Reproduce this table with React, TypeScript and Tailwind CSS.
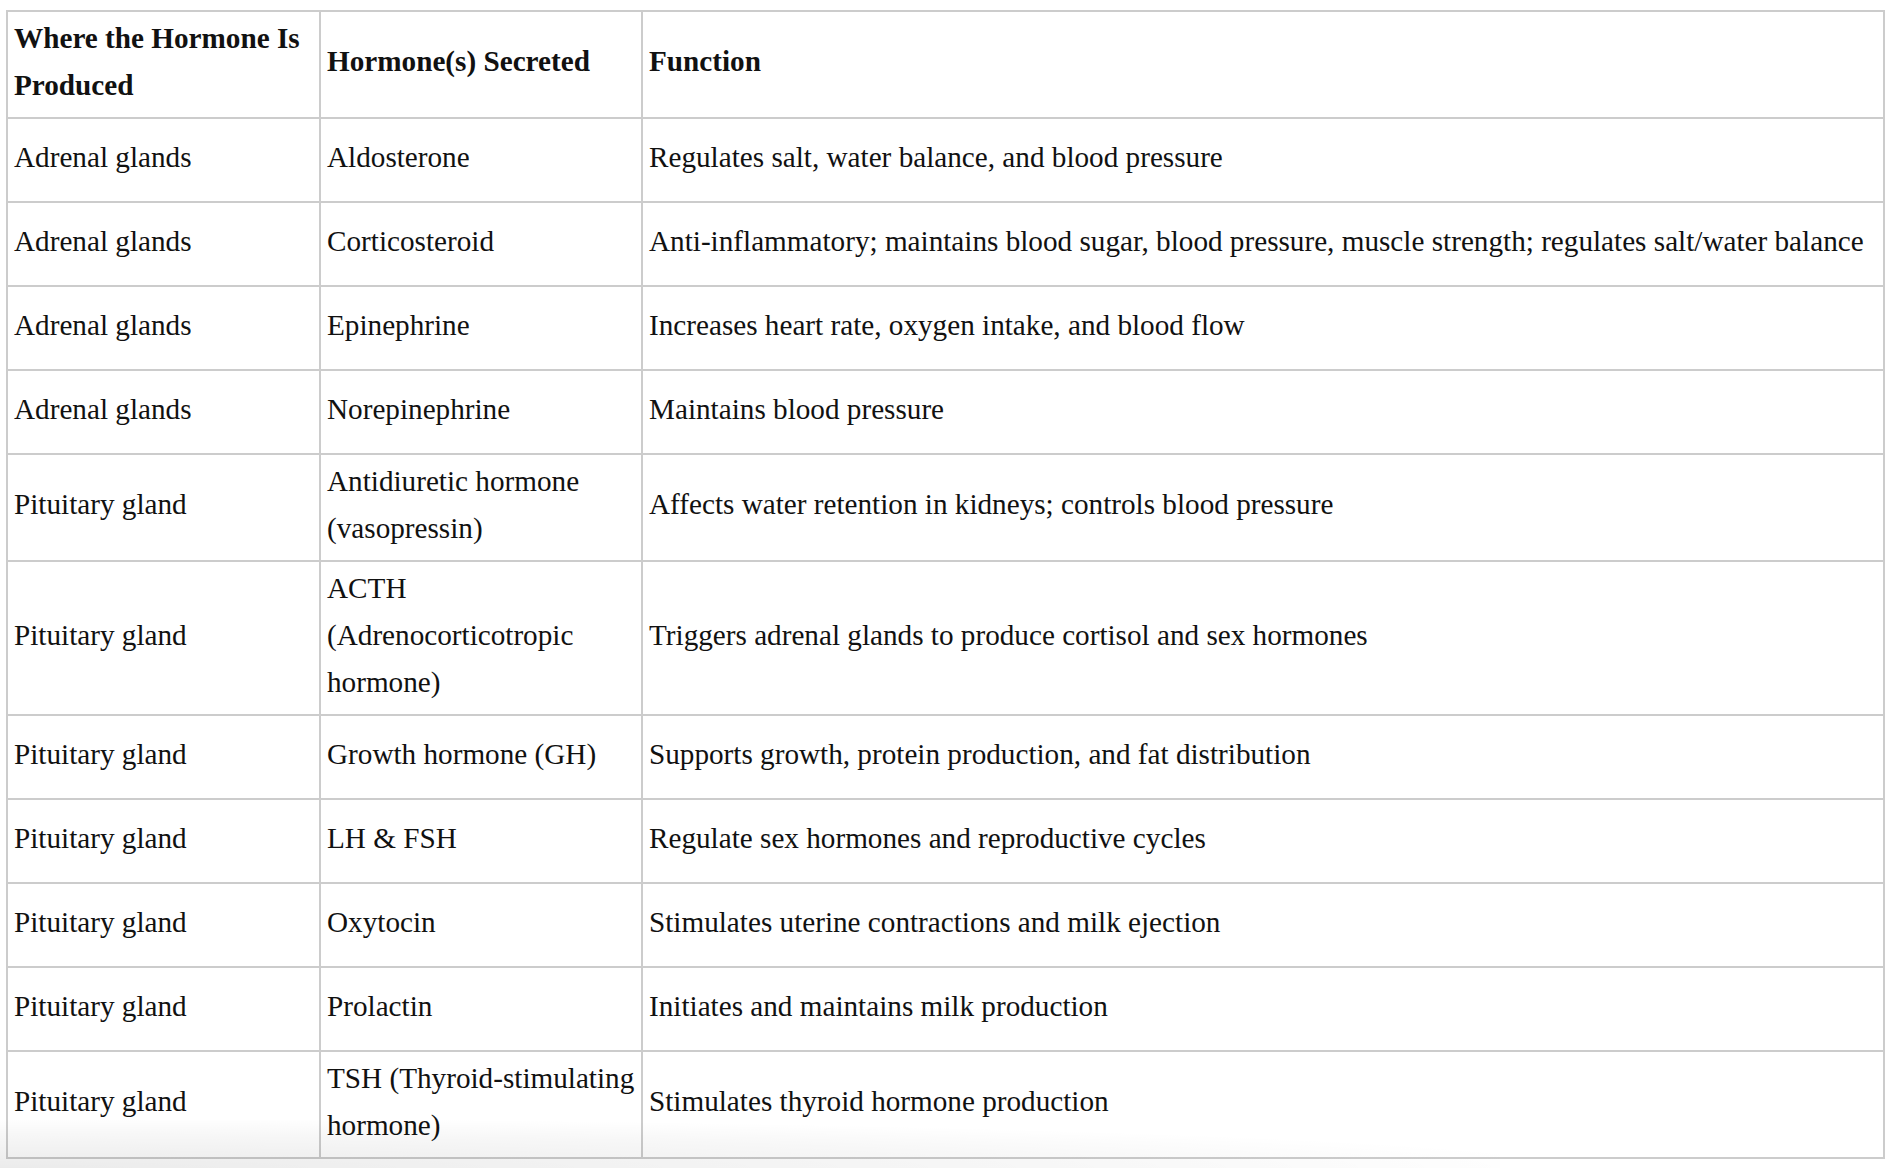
const rows: [string, string[], string][] = [
  ["Adrenal glands", ["Aldosterone"], "Regulates salt, water balance, and blood pressure"],
  ["Adrenal glands", ["Corticosteroid"], "Anti-inflammatory; maintains blood sugar, blood pressure, muscle strength; regulates salt/water balance"],
  ["Adrenal glands", ["Epinephrine"], "Increases heart rate, oxygen intake, and blood flow"],
  ["Adrenal glands", ["Norepinephrine"], "Maintains blood pressure"],
  ["Pituitary gland", ["Antidiuretic hormone", "(vasopressin)"], "Affects water retention in kidneys; controls blood pressure"],
  ["Pituitary gland", ["ACTH", "(Adrenocorticotropic", "hormone)"], "Triggers adrenal glands to produce cortisol and sex hormones"],
  ["Pituitary gland", ["Growth hormone (GH)"], "Supports growth, protein production, and fat distribution"],
  ["Pituitary gland", ["LH & FSH"], "Regulate sex hormones and reproductive cycles"],
  ["Pituitary gland", ["Oxytocin"], "Stimulates uterine contractions and milk ejection"],
  ["Pituitary gland", ["Prolactin"], "Initiates and maintains milk production"],
  ["Pituitary gland", ["TSH (Thyroid-stimulating", "hormone)"], "Stimulates thyroid hormone production"],
];

const cell = "border-2 border-[#cccccc] px-[6px] pt-[2.5px] pb-[8.5px] h-[84px] align-middle";

export default function App() {
  return (
    <div className="relative w-[1892px] h-[1168px] overflow-hidden bg-white text-[#111] font-['Liberation_Serif',serif] text-[29.2px] leading-[47px]">
      <div className="pt-[10px] pl-[6px] pr-[7px]">
        <table className="w-full table-fixed border-collapse">
          <colgroup>
            <col className="w-[313px]" />
            <col className="w-[322px]" />
            <col />
          </colgroup>
          <thead>
            <tr>
              <th className={cell + " text-left font-bold"}>
                Where the Hormone Is
                <br />
                Produced
              </th>
              <th className={cell + " text-left font-bold"}>Hormone(s) Secreted</th>
              <th className={cell + " text-left font-bold"}>Function</th>
            </tr>
          </thead>
          <tbody>
            {rows.map(([where, hormone, fn], idx) => (
              <tr key={idx}>
                <td className={cell}>{where}</td>
                <td className={cell}>
                  {hormone.map((line, i) => (
                    <span key={i}>
                      {i > 0 && <br />}
                      {line}
                    </span>
                  ))}
                </td>
                <td className={cell + " whitespace-nowrap"}>{fn}</td>
              </tr>
            ))}
          </tbody>
        </table>
      </div>
      {/* fade at the bottom edge */}
      <div className="pointer-events-none absolute bottom-0 left-0 w-[1500px] h-[48px] bg-[radial-gradient(ellipse_at_bottom_left,rgba(0,0,0,0.08),rgba(0,0,0,0.03)_50%,transparent_75%)]" />
    </div>
  );
}
